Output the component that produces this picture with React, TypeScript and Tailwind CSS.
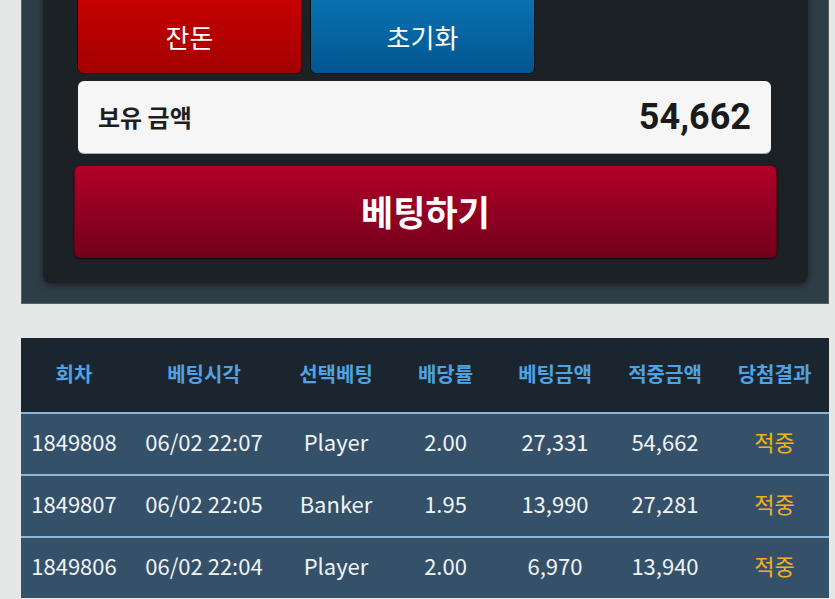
import React from "react";

const rows = [
  { no: "1849808", time: "06/02 22:07", pick: "Player", odds: "2.00", bet: "27,331", win: "54,662", result: "적중" },
  { no: "1849807", time: "06/02 22:05", pick: "Banker", odds: "1.95", bet: "13,990", win: "27,281", result: "적중" },
  { no: "1849806", time: "06/02 22:04", pick: "Player", odds: "2.00", bet: "6,970", win: "13,940", result: "적중" },
];

const heads = ["회차", "베팅시각", "선택베팅", "배당률", "베팅금액", "적중금액", "당첨결과"];

const cols = "grid grid-cols-[106px_154px_110px_109px_110px_110px_109px]";

const App = () => {
  return (
    <div
      className="min-h-screen w-[835px] overflow-hidden bg-[#e6e7e7] pl-[21px] pr-[6px]"
      style={{ fontFamily: '"Noto Sans CJK KR", "Noto Sans", sans-serif' }}
    >
      {/* bet panel, top is scrolled off */}
      <div className="-mt-[20px] border-x border-b border-[#55626b] bg-[#2f3d47] pb-[20px] pl-[21px] pr-[20px]">
        <div className="rounded-b-lg bg-[#1c2125] px-[31px] pb-[25px] pt-[14px] shadow-[0_2px_6px_rgba(0,0,0,0.5)]">
          <div className="flex gap-[8px] pl-[3px]">
            <button className="flex h-[80px] w-[225px] items-center justify-center rounded-md border border-[#2a0505] bg-gradient-to-b from-[#c80000] to-[#a30000] pt-[4px] text-[26px] text-white">
              잔돈
            </button>
            <button className="flex h-[80px] w-[225px] items-center justify-center rounded-md border border-[#06121c] bg-gradient-to-b from-[#0a74b4] to-[#03558f] pt-[4px] text-[26px] text-white">
              초기화
            </button>
          </div>
          <div className="mx-[4px] mr-[6px] mt-[7px] flex h-[73px] items-center justify-between rounded-md border-b border-[#9fb0c4] bg-[#f6f6f6] pl-[20px] pr-[20px]">
            <span className="text-[24px] font-bold text-[#1e1e1e]">보유 금액</span>
            <span
              className="text-[36px] font-bold text-[#1a1a1a]"
              style={{ fontFamily: "Roboto, sans-serif" }}
            >
              54,662
            </span>
          </div>
          <button className="mt-[11px] flex h-[93px] w-full items-center justify-center rounded-md border border-[#5a0614] bg-gradient-to-b from-[#b2002a] to-[#72001a] text-[35px] font-bold text-white shadow-[0_1px_2px_rgba(0,0,0,0.6)]">
            베팅하기
          </button>
        </div>
      </div>

      {/* history table */}
      <div className="mt-[34px] w-[808px]">
        <div className={`${cols} h-[74px] items-center bg-[#1a2530] pb-[2px] text-[20px] font-bold leading-none text-[#4fa3e3]`}>
          {heads.map((h) => (
            <div key={h} className="text-center">
              {h}
            </div>
          ))}
        </div>
        {rows.map((r) => (
          <div key={r.no} className={`${cols} h-[62px] items-center border-t-2 border-[#8cb7d6] bg-[#35516a] pb-[6px] text-[22px] leading-none text-[#f1f4f7]`}>
            <div className="text-center">{r.no}</div>
            <div className="text-center">{r.time}</div>
            <div className="text-center">{r.pick}</div>
            <div className="text-center">{r.odds}</div>
            <div className="text-center">{r.bet}</div>
            <div className="text-center">{r.win}</div>
            <div className="text-center text-[#f2b21e]">{r.result}</div>
          </div>
        ))}
      </div>
    </div>
  );
};

export default App;
